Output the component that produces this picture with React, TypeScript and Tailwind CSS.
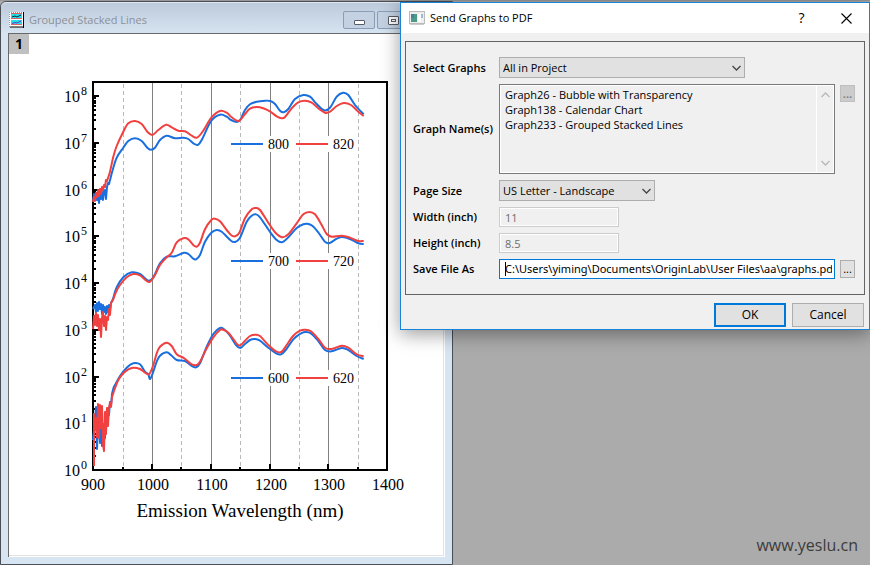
import React, { useState } from 'react';

type Point = [number, number];

const BLUE = '#1a6fdf';
const RED = '#f14040';

const curves: { name: string; color: string; noise: string; points: Point[] }[] = [
  {
    name: '800',
    color: BLUE,
    noise: 'M93 201L94 194L95 199L96 193L97 200L98 194L99 203L100 192L101 199L102 192L103 200L104 191L105 190L106 199L107 187L108 183L109 184L110 180',
    points: [[110, 180], [112.7, 170], [116.7, 157.7], [123.3, 147.7], [128.3, 141], [135, 138.3], [141.7, 141], [147.3, 147.7], [150.7, 149.7], [155, 147.7], [160, 140], [166.7, 135.7], [175, 138.3], [183.3, 137.7], [188.3, 139], [193.3, 143.3], [197.7, 145], [201.7, 140], [211.3, 120.7], [220, 114.7], [226.7, 116.7], [231, 120], [237, 122], [240.3, 119.7], [245, 110], [250, 104.3], [256.7, 101.7], [265, 100.7], [270.3, 101], [275, 104], [280, 110.7], [283.7, 112.3], [288.3, 109], [295, 99], [303.3, 95], [310, 96.7], [316.7, 104], [324, 110.3], [330, 107.7], [336.7, 96.7], [343, 92.7], [348.3, 95], [355, 105], [363.7, 114.3]],
  },
  {
    name: '820',
    color: RED,
    noise: 'M93 202L94 197L95 201L96 193L97 197L98 190L99 196L100 189L101 194L102 187L103 190L104 185L105 187L106 180L107 181L108 178',
    points: [[108, 178], [110, 171.7], [113.3, 156.7], [116.7, 146], [123.3, 131.7], [128.3, 123.3], [135, 121], [141.7, 124], [147.3, 131.7], [152.3, 135], [158.3, 130], [166, 124.7], [171.7, 127.3], [178.3, 130.7], [185, 131.3], [191.7, 135.7], [197, 137.7], [203.3, 130.7], [211.3, 117.7], [220, 111], [226.7, 112.7], [231, 116.7], [237, 120.7], [240.3, 120], [245, 114], [250, 108.7], [256.7, 107], [263.3, 108.3], [270.3, 111.7], [276.7, 116.3], [281.7, 118.3], [285, 117], [291.7, 108.3], [298.3, 102.3], [305, 100.7], [311.7, 102.7], [318.3, 108.3], [325, 112.7], [330, 111.7], [336.7, 106], [343.7, 103], [351, 105], [358.3, 111.7], [363.7, 116]],
  },
  {
    name: '700',
    color: BLUE,
    noise: 'M93 309L95 305L96 312L97 303L98 311L99 302L100 309L101 304L102 314L103 305L104 312L105 307L106 314L107 306L108 312L109 305L110 309L111 303L113 299',
    points: [[113, 299], [116.7, 287.3], [123.3, 277.3], [131.7, 272.3], [140, 274], [148.3, 280.7], [153.3, 277.3], [160, 263.3], [166.7, 256.7], [175, 256.3], [184, 252.7], [188.3, 254], [193.3, 258.7], [196, 259.3], [200, 255], [205, 241.7], [211.3, 232.7], [216.7, 230], [221.7, 231.7], [231, 240.7], [235, 242], [240, 237.7], [246.7, 221.7], [251.7, 215.7], [255.7, 214.3], [260, 217.3], [270.3, 232.3], [276.7, 240], [282, 242.3], [288.3, 237.3], [296.7, 228], [303.3, 224.3], [307.3, 223.7], [312.3, 225.7], [318.3, 232.3], [325, 241.7], [329.7, 243], [336.7, 238.7], [342.3, 237], [350, 239], [358.3, 243.3], [363.7, 244]],
  },
  {
    name: '720',
    color: RED,
    noise: 'M93 329L94 316L95 325L96 313L97 326L98 315L99 330L100 319L101 337L102 318L103 312L104 326L105 316L106 330L107 317L108 320L109 309L110 315L111 303L113 300',
    points: [[113, 300], [116, 292], [120, 285], [126.7, 277.3], [133.3, 274], [140, 275.3], [146.7, 281], [150, 281.7], [155, 275], [160, 265], [166.7, 257.3], [171.7, 252.7], [176.7, 242.3], [183.3, 238.3], [188.3, 239.3], [193.3, 245], [196.7, 246.7], [200, 242.7], [205, 229.3], [211.3, 220], [215, 218.7], [220, 221.3], [226.7, 230], [231, 235], [235, 236.3], [239.3, 232.7], [245, 218.3], [251.7, 209.3], [255.7, 208], [260, 210], [268.3, 222.7], [275, 232.3], [282, 237.3], [288.3, 234.3], [296.7, 223.3], [303.3, 214.3], [309.3, 212], [315, 214.3], [321.7, 225], [326.7, 234], [331.7, 236.7], [341.7, 235.7], [350, 237.7], [358.3, 241], [363.7, 241]],
  },
  {
    name: '600',
    color: BLUE,
    noise: 'M93 440L95 420L96 407L97 449L98 424L99 410L100 443L101 410L102 446L103 430L104 424L105 438L106 412L107 425L108 408L109 415L110 402L111 406L112 394',
    points: [[112, 394], [113.5, 388], [115, 385], [120, 376], [126.7, 367.7], [133.3, 363.3], [140, 364.3], [145, 371.7], [148.3, 374.3], [150, 379], [152.7, 373.3], [156.7, 361.7], [160, 355.7], [166.7, 352.3], [171.7, 355.7], [176.7, 360], [185, 361], [191.7, 366], [196, 367.3], [200, 363.3], [206.7, 346.7], [213.3, 334], [220, 328], [224, 329.3], [230, 335.7], [236, 345], [240.3, 348], [245, 344], [250, 340], [255, 339], [260, 340.7], [268.3, 347.7], [276.7, 353.7], [281, 354.3], [285.7, 350], [293.3, 339.3], [300, 334], [305, 332], [311, 333.3], [318.3, 341], [325, 350], [331.7, 351.3], [341.7, 348], [348.3, 350], [356.7, 356], [363.7, 359]],
  },
  {
    name: '620',
    color: RED,
    noise: 'M94 466L94 414L95 430L96 418L97 437L98 404L99 438L100 405L101 428L102 406L103 444L104 451L105 412L106 434L107 408L108 426L109 408L110 403L111 407L112 397L114 391',
    points: [[114, 391], [118.3, 380], [123.3, 373.3], [128.3, 369.3], [133.3, 367.7], [140, 369], [145, 372.7], [149.3, 374], [153.3, 365], [156.7, 353.3], [160, 346.7], [166.7, 342.7], [171.7, 346], [176.7, 354.3], [183.3, 357.7], [191.7, 364.3], [196.7, 365], [200, 361.7], [206.7, 348.3], [213.3, 337.3], [220, 330], [223.3, 329.7], [228.3, 332.7], [233.3, 339], [237, 344], [240.3, 345.3], [245, 340.7], [250, 336], [255, 334.7], [260, 336], [268.3, 345], [276.7, 351.7], [281.7, 351.7], [286.7, 345], [293.3, 335.7], [300, 330.7], [305, 329.7], [311, 331.3], [318.3, 339], [325, 347.7], [331.7, 349], [341.7, 345.7], [348.3, 347.7], [356.7, 354.3], [363.7, 356.3]],
  },
];

const legends = [
  { y: 144, left: '800', right: '820' },
  { y: 261, left: '700', right: '720' },
  { y: 378, left: '600', right: '620' },
];

const majorX = [
  { x: 152, label: '1000' },
  { x: 211, label: '1100' },
  { x: 270, label: '1200' },
  { x: 328, label: '1300' },
];
const minorX = [123, 181, 240, 299, 358];
const decades = [0, 1, 2, 3, 4, 5, 6, 7, 8];

const decadeY = (n: number) => Math.round(470 - 46.75 * n);

// Catmull-Rom through the sample points
function smooth(p: Point[]) {
  let d = '';
  for (let i = 0; i < p.length - 1; i++) {
    const a = p[i - 1] || p[i];
    const b = p[i];
    const c = p[i + 1];
    const e = p[i + 2] || c;
    d += `C${b[0] + (c[0] - a[0]) / 6} ${b[1] + (c[1] - a[1]) / 6} ${c[0] - (e[0] - b[0]) / 6} ${c[1] - (e[1] - b[1]) / 6} ${c[0]} ${c[1]}`;
  }
  return d;
}

function minorTicks() {
  const ys: number[] = [];
  decades.forEach((n) => {
    for (let k = 2; k < 10; k++) {
      const y = 470 - 46.75 * (n + Math.log10(k));
      if (y > 84) ys.push(Math.round(y));
    }
  });
  return ys;
}

function SpectrumChart() {
  return (
    <svg
      viewBox="9 34 434 521"
      className="block w-full font-['Liberation_Serif',serif]"
      role="img"
      aria-label="Emission spectra"
    >
      {/* grid */}
      {majorX.map(({ x }) => (
        <path key={x} d={`M${x}.5 83V469`} stroke="#808080" />
      ))}
      {minorX.map((x) => (
        <path key={x} d={`M${x}.5 84V469`} stroke="#b8b8b8" strokeDasharray="4 3" />
      ))}

      {/* legend backgrounds */}
      {legends.map(({ y }) => (
        <g key={y} fill="#fff">
          <rect x="264" y={y - 8} width="29" height="16" />
          <rect x="328" y={y - 8} width="28" height="16" />
        </g>
      ))}

      {/* axes */}
      <rect x="93" y="82" width="294" height="388" fill="none" stroke="#000" strokeWidth="2" />
      {decades.map((n) => (
        <path key={n} d={`M93 ${decadeY(n)}H99`} stroke="#000" strokeWidth="2" />
      ))}
      {minorTicks().map((y) => (
        <path key={y} d={`M93 ${y}H96`} stroke="#000" strokeWidth="2" />
      ))}
      {majorX.map(({ x }) => (
        <path key={x} d={`M${x} 470V464`} stroke="#000" strokeWidth="2" />
      ))}
      {minorX.map((x) => (
        <path key={x} d={`M${x} 470V467`} stroke="#000" strokeWidth="2" />
      ))}

      {curves.map((c) => (
        <path
          key={c.name}
          d={c.noise + smooth(c.points)}
          fill="none"
          stroke={c.color}
          strokeWidth="2"
          strokeLinejoin="round"
        />
      ))}

      {legends.map(({ y, left, right }) => (
        <g key={y} fontSize="14">
          <path d={`M231 ${y}H263`} stroke={BLUE} strokeWidth="2" />
          <text x="268" y={y + 5}>{left}</text>
          <path d={`M296 ${y}H328`} stroke={RED} strokeWidth="2" />
          <text x="333" y={y + 5}>{right}</text>
        </g>
      ))}

      {/* tick labels */}
      {decades.map((n) => (
        <g key={n}>
          <text x="64" y={decadeY(n) + 6} fontSize="16">10</text>
          <text x="81" y={decadeY(n) - 1} fontSize="12">{n}</text>
        </g>
      ))}
      <g fontSize="16" textAnchor="middle">
        <text x="93" y="490">900</text>
        {majorX.map(({ x, label }) => (
          <text key={x} x={x + 1} y="490">{label}</text>
        ))}
        <text x="388" y="490">1400</text>
      </g>
      <text x="240" y="517" fontSize="19" textAnchor="middle">Emission Wavelength (nm)</text>
    </svg>
  );
}

function GraphIcon() {
  return (
    <svg width="16" height="16" viewBox="0 0 16 16" aria-hidden="true">
      <rect width="15" height="15" fill="#fff" />
      <path d="M0 .5H14M.5 0V15" stroke="#999" strokeDasharray="1 1" />
      <path d="M14.5 0V16M1 15H15" stroke="#000" />
      <path d="M2 1H13V6H2ZM2 8H13V12H2Z" fill="#20e0e8" />
      <path d="M2 1.5H13M2 6.5H13M2 12.5H13" stroke="#e06060" />
      <path d="M3 5L6 4L8 5L12 3" fill="none" stroke="#124" />
      <path d="M3 11.5L6 10.5L8 11L12 9" fill="none" stroke="#7030c0" />
    </svg>
  );
}

function DialogIcon() {
  return (
    <svg width="16" height="14" viewBox="0 0 16 14" aria-hidden="true">
      <rect x=".5" y=".5" width="15" height="12" fill="#eee" stroke="#bbb" />
      <rect x="2" y="3" width="6" height="8" fill="#4d9b86" />
      <rect x="2" y="3" width="3" height="4" fill="#4c7f9c" />
      <rect x="9" y="3" width="3" height="8" fill="#fff" />
      <rect x="12" y="3" width="2" height="4" fill="#9bbbd0" />
      <path d="M1 13.5H15" stroke="#ccc" />
    </svg>
  );
}

function Chevron({ up = false, className = '' }: { up?: boolean; className?: string }) {
  return (
    <svg width="9" height="6" viewBox="0 0 9 6" className={className} aria-hidden="true">
      <path d={up ? 'M.5 5L4.5 1L8.5 5' : 'M.5 1L4.5 5L8.5 1'} fill="none" stroke="currentColor" strokeWidth="1.3" />
    </svg>
  );
}

function GraphWindow() {
  return (
    <section className="absolute left-0 top-px w-[453px] rounded-tl-md border border-[#4a4f55] bg-[#d7e4f2] px-[7px] pb-[7px] font-['Open_Sans',sans-serif]">
      <header className="-mx-[7px] flex h-[31px] items-center gap-1 rounded-tl-md border-t border-[#dfe8f2] bg-gradient-to-b from-[#bdcadb] to-[#d6e3f1] pl-2 pt-1">
        <GraphIcon />
        <h1 className="flex-1 text-[11px] leading-4 text-[#8c9198]">Grouped Stacked Lines</h1>
        <div className="flex gap-[2px]">
          <button
            type="button"
            aria-label="Minimize"
            className="flex h-[18px] w-8 items-center justify-center rounded-[2px] border border-[#8b9db5] bg-[#c3d1e2]"
          >
            <span className="mt-1 h-[5px] w-[11px] rounded-[1px] border border-[#555b66] bg-white" />
          </button>
          <button
            type="button"
            aria-label="Restore"
            className="flex h-[18px] w-8 items-center justify-center rounded-[2px] border border-[#8b9db5] bg-[#c3d1e2]"
          >
            <span className="flex h-[9px] w-[11px] items-center justify-center rounded-[1px] border border-[#555b66] bg-white">
              <span className="h-[3px] w-[5px] border border-[#555b66]" />
            </span>
          </button>
          <span className="w-[41px]" />
        </div>
      </header>
      <div className="border-l border-t border-[#696969] bg-white pb-px pr-px">
        <div className="relative border-b border-r border-[#e3e3e3]">
          <SpectrumChart />
          <button
            type="button"
            className="absolute left-0 top-0 flex h-5 w-5 items-center justify-center bg-[#c0c0c0] text-[14px] font-bold leading-5 text-black"
          >
            1
          </button>
        </div>
      </div>
    </section>
  );
}

const labelClass = 'self-center whitespace-nowrap text-[11px] font-semibold leading-4 text-black';
const selectClass =
  'col-start-1 row-start-1 h-[21px] w-full appearance-none border border-[#adadad] bg-[#e1e1e1] pl-[3px] pr-5 text-[11px] leading-4 text-black outline-none';
const sizeClass =
  'h-5 w-[120px] border border-[#cccccc] bg-[#f0f0f0] px-[5px] text-[11px] leading-4 text-[#6d6d6d] shadow-[inset_0_0_0_1px_#fff]';

function SendGraphsDialog() {
  const [path, setPath] = useState('C:\\Users\\yiming\\Documents\\OriginLab\\User Files\\aa\\graphs.pdf');

  return (
    <form
      role="dialog"
      aria-labelledby="dialog-title"
      onSubmit={(e) => e.preventDefault()}
      className="absolute left-[400px] right-0 top-[2px] min-w-[470px] border border-[#1883d7] bg-[#f0f0f0] font-['Open_Sans',sans-serif] text-black shadow-[0_4px_18px_rgba(0,0,0,0.4)]"
    >
      <header className="flex h-[30px] items-center bg-white pl-2">
        <DialogIcon />
        <h2 id="dialog-title" className="flex-1 pl-[5px] text-[11px] leading-4">Send Graphs to PDF</h2>
        <button type="button" aria-label="Help" className="h-[30px] w-[45px] text-[14px] leading-4">?</button>
        <button type="button" aria-label="Close" className="flex h-[30px] w-[45px] items-center justify-center">
          <svg width="11" height="11" viewBox="0 0 11 11" aria-hidden="true">
            <path d="M.5 .5L10.5 10.5M10.5 .5L.5 10.5" stroke="#000" strokeWidth="1.1" />
          </svg>
        </button>
      </header>

      <div className="mx-1 mt-2 grid grid-cols-[86px_1fr] gap-y-[6px] border border-[#646464] py-[15px] pl-[7px] pr-[9px]">
        <label htmlFor="graphs" className={labelClass}>Select Graphs</label>
        <div className="grid w-[246px] items-center">
          <select id="graphs" className={selectClass}>
            <option>All in Project</option>
          </select>
          <Chevron className="pointer-events-none col-start-1 row-start-1 mr-1 justify-self-end text-[#444]" />
        </div>

        <label htmlFor="names" className={labelClass}>Graph Name(s)</label>
        <div className="flex items-start gap-[5px]">
          <div className="flex h-[90px] flex-1 border border-[#7a7a7a] shadow-[inset_0_0_0_1px_#fff]">
            <textarea
              id="names"
              readOnly
              className="my-px ml-px flex-1 resize-none overflow-hidden border-r border-white px-1 pt-px text-[11px] leading-[15px] outline-none"
              defaultValue={'Graph26 - Bubble with Transparency\nGraph138 - Calendar Chart\nGraph233 - Grouped Stacked Lines'}
            />
            <div className="flex w-[17px] flex-col items-center justify-between py-[7px] text-[#b8b8b8]">
              <Chevron up />
              <Chevron />
            </div>
          </div>
          <button type="button" aria-label="Browse graphs" className="mt-px h-[17px] w-[15px] border border-[#bfbfbf] bg-[#cccccc] text-[11px] font-bold leading-3 text-[#838383]">
            ...
          </button>
        </div>

        <label htmlFor="page" className={labelClass}>Page Size</label>
        <div className="grid w-[156px] items-center">
          <select id="page" className={selectClass}>
            <option>US Letter - Landscape</option>
          </select>
          <Chevron className="pointer-events-none col-start-1 row-start-1 mr-1 justify-self-end text-[#444]" />
        </div>

        <label htmlFor="width" className={labelClass}>Width (inch)</label>
        <input id="width" disabled defaultValue="11" className={sizeClass} />

        <label htmlFor="height" className={labelClass}>Height (inch)</label>
        <input id="height" disabled defaultValue="8.5" className={sizeClass} />

        <label htmlFor="file" className={labelClass}>Save File As</label>
        <div className="flex items-center gap-[5px]">
          <div className="relative flex h-5 flex-1 border border-[#0078d7] bg-white px-[2px]">
            <input
              id="file"
              value={path}
              onChange={(e) => setPath(e.target.value)}
              className="w-0 flex-1 pl-[3px] font-['Noto_Sans',sans-serif] text-[11px] leading-4 outline-none"
            />
            <span className="absolute left-[5px] top-[2px] h-[14px] w-px bg-black" />
          </div>
          <button type="button" aria-label="Browse file" className="h-[18px] w-[15px] border border-[#adadad] bg-[#e1e1e1] text-[11px] leading-3">
            ...
          </button>
        </div>
      </div>

      <footer className="flex justify-end gap-[6px] pb-[2px] pr-[5px] pt-2">
        <button type="submit" className="h-6 w-[72px] border-2 border-[#0078d7] bg-[#e1e1e1] text-[12px] leading-4">OK</button>
        <button type="button" className="h-6 w-[72px] border border-[#adadad] bg-[#e1e1e1] text-[12px] leading-4">Cancel</button>
      </footer>
    </form>
  );
}

export default function App() {
  return (
    <main className="relative flex min-h-screen flex-col items-end justify-end overflow-hidden bg-[#ababab] shadow-[inset_0_1px_0_#999]">
      <GraphWindow />
      <SendGraphsDialog />
      <p className="pb-2 pr-3 font-['Open_Sans',sans-serif] text-[16px] leading-6 text-[#3c3c3c]">www.yeslu.cn</p>
    </main>
  );
}
